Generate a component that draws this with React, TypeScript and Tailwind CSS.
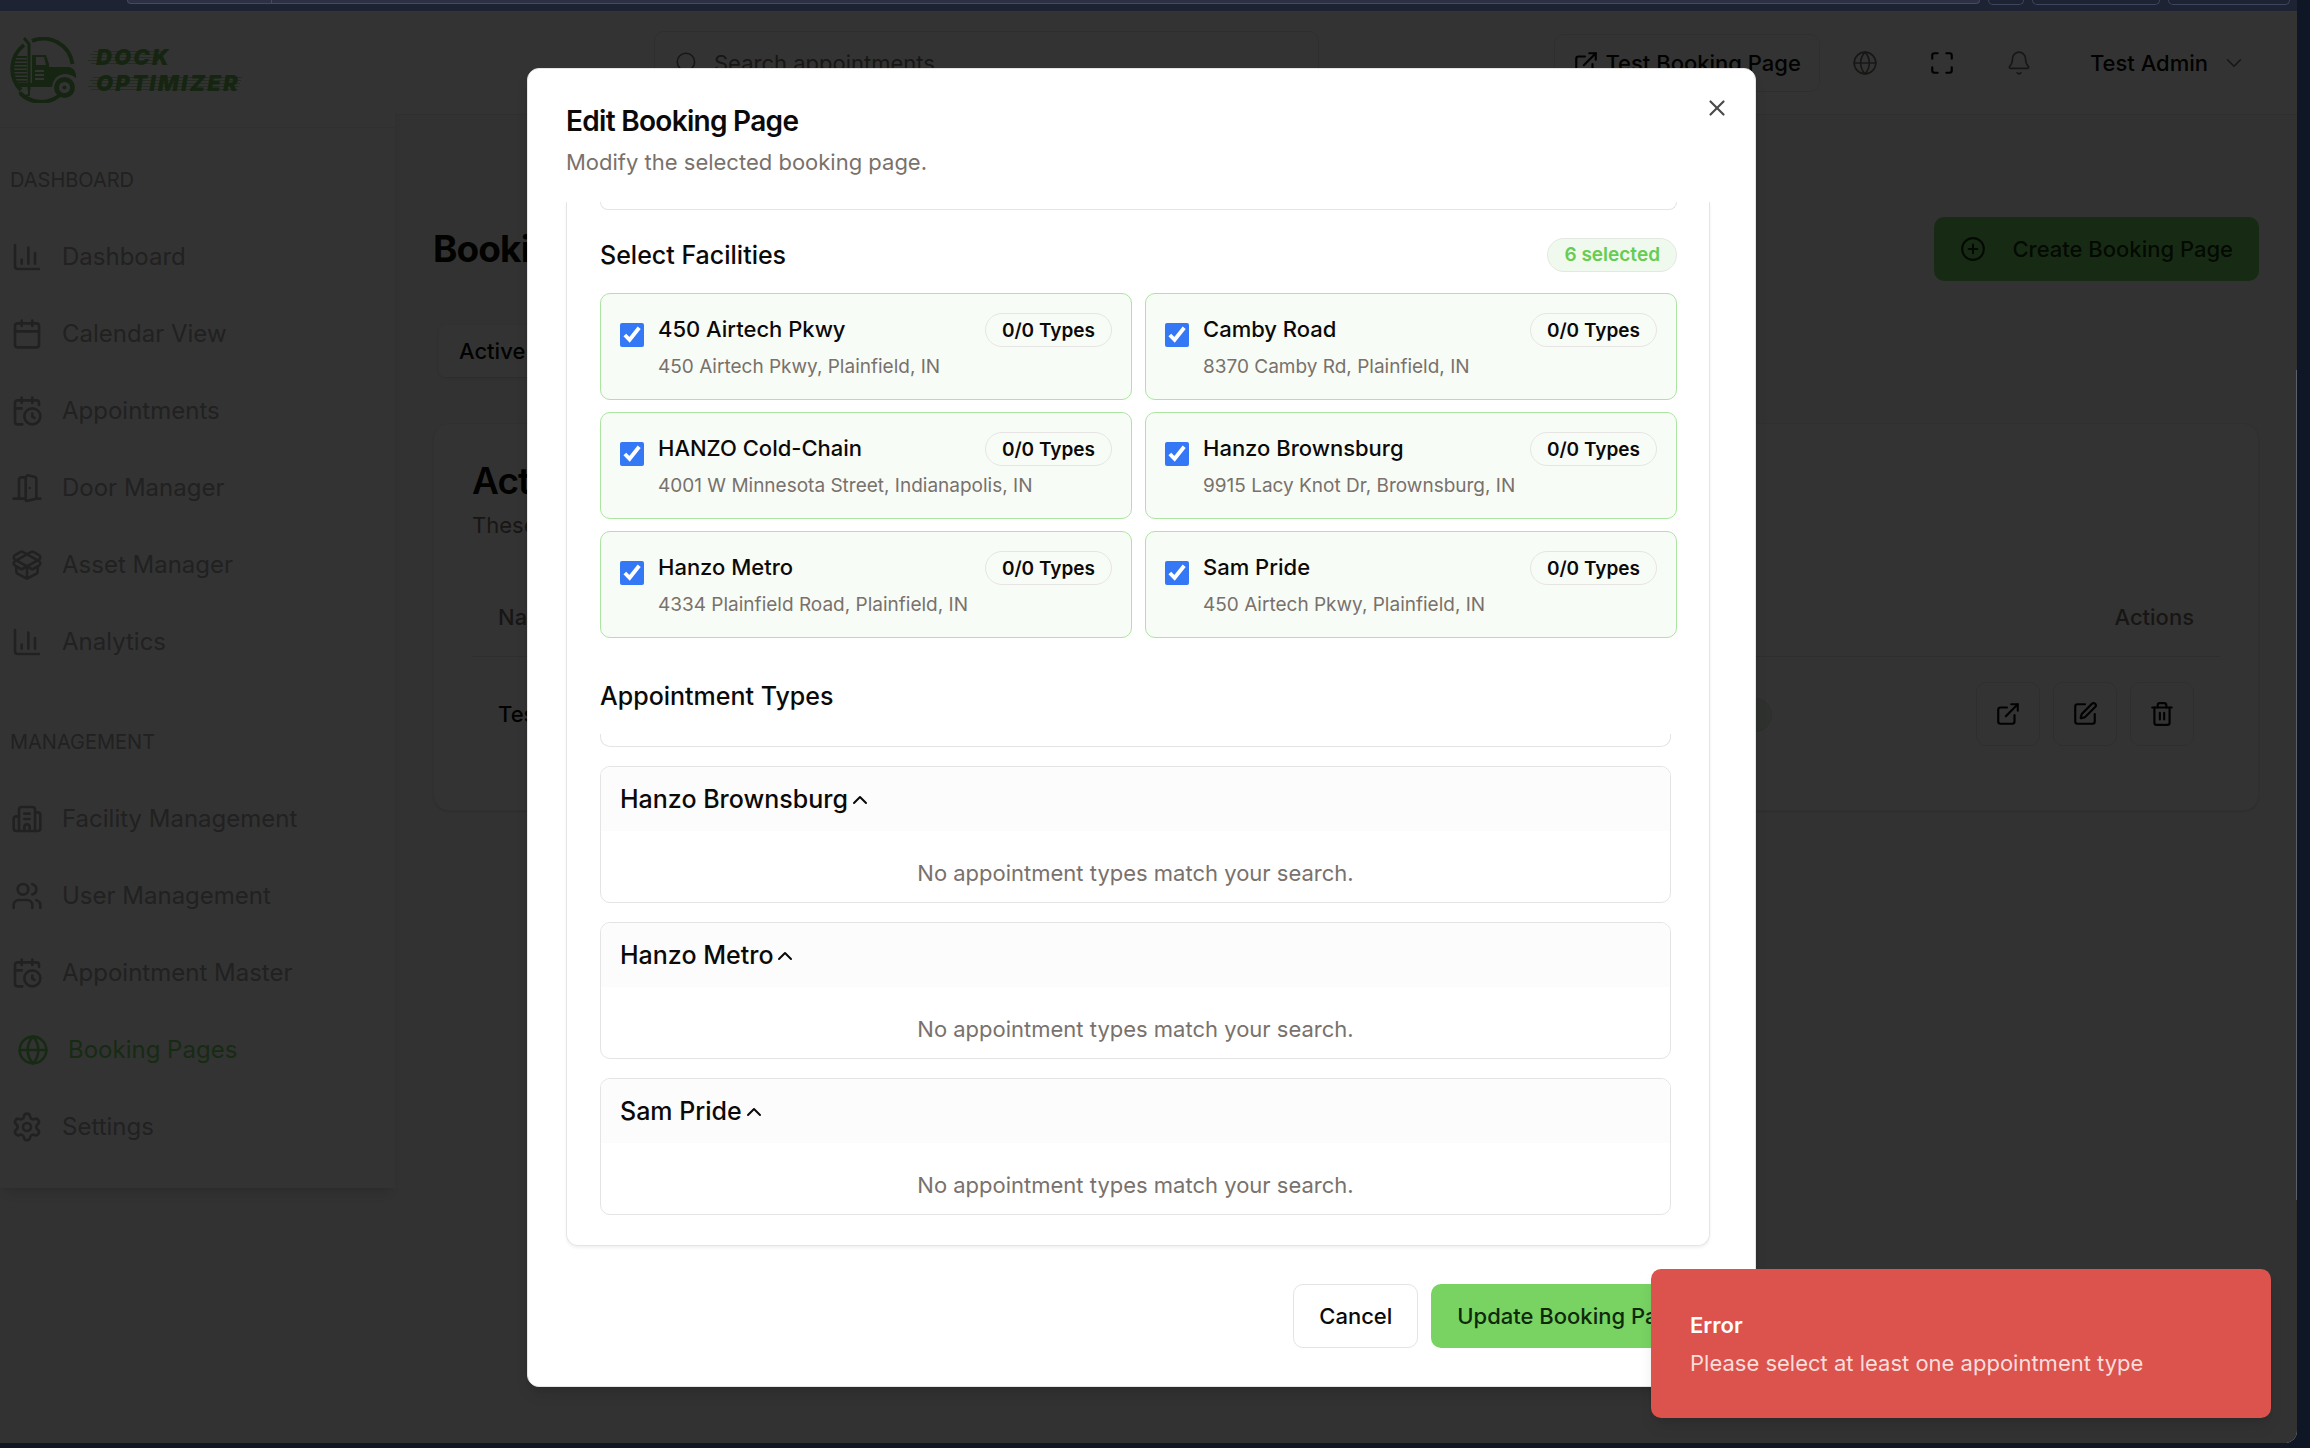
import {
  Bell,
  Building2,
  Calendar,
  CalendarClock,
  ChartColumn,
  ChevronDown,
  ChevronUp,
  CirclePlus,
  DoorOpen,
  ExternalLink,
  Globe,
  Maximize,
  PackageOpen,
  Search,
  Settings,
  SquarePen,
  Trash2,
  Users,
  X,
  type LucideIcon,
} from "lucide-react";

type NavEntry = { label: string; icon: LucideIcon; active?: boolean };

const dashboardNav: NavEntry[] = [
  { label: "Dashboard", icon: ChartColumn },
  { label: "Calendar View", icon: Calendar },
  { label: "Appointments", icon: CalendarClock },
  { label: "Door Manager", icon: DoorOpen },
  { label: "Asset Manager", icon: PackageOpen },
  { label: "Analytics", icon: ChartColumn },
];

const managementNav: NavEntry[] = [
  { label: "Facility Management", icon: Building2 },
  { label: "User Management", icon: Users },
  { label: "Appointment Master", icon: CalendarClock },
  { label: "Booking Pages", icon: Globe, active: true },
  { label: "Settings", icon: Settings },
];

const facilities = [
  { name: "450 Airtech Pkwy", address: "450 Airtech Pkwy, Plainfield, IN" },
  { name: "Camby Road", address: "8370 Camby Rd, Plainfield, IN" },
  { name: "HANZO Cold-Chain", address: "4001 W Minnesota Street, Indianapolis, IN" },
  { name: "Hanzo Brownsburg", address: "9915 Lacy Knot Dr, Brownsburg, IN" },
  { name: "Hanzo Metro", address: "4334 Plainfield Road, Plainfield, IN" },
  { name: "Sam Pride", address: "450 Airtech Pkwy, Plainfield, IN" },
];

const typeGroups = ["Hanzo Brownsburg", "Hanzo Metro", "Sam Pride"];

function BrowserChrome() {
  return (
    <div className="flex h-3 shrink-0 items-start gap-2 border-b border-[#2a3358] bg-[#1d2333] pr-[7px] pl-[127px]">
      <div className="flex h-1 flex-1 rounded-b-md border-x border-b border-[#454a60] bg-[#2d3145]">
        <div className="w-36 border-r border-[#454a60]" />
      </div>
      <div className="h-[5px] w-9 rounded-b-md border border-t-0 border-[#3d4560]" />
      <div className="h-[5px] w-32 rounded-b-md border border-t-0 border-[#3d4560]" />
      <div className="h-[5px] w-[122px] rounded-b-md border border-t-0 border-[#3d4560]" />
    </div>
  );
}

function SpeedLines({ width }: { width: number }) {
  return (
    <svg
      aria-hidden="true"
      className="absolute top-[3px] left-0 opacity-50"
      width={width}
      height="15"
      stroke="currentColor"
      strokeWidth="1"
    >
      <path d={`M5 1.5H${width - 4}M2 4.5H${width - 5}M4 7.5H${width - 6}M0 10.5H${width - 7}M3 13.5H${width - 8}`} />
    </svg>
  );
}

function Logo() {
  return (
    <div className="flex items-center gap-2.5 text-[#6fb854]">
      <svg width="68" height="66" viewBox="0 0 68 66" fill="none" aria-hidden="true">
        <path d="M22 4A29.500 29.500 0 0 1 62.500 27" stroke="currentColor" strokeWidth="4" />
        <path d="M14 8A30 30 0 0 0 11 53" stroke="currentColor" strokeWidth="4" />
        <path d="M10 56A29.500 29.500 0 0 0 50 58" stroke="currentColor" strokeWidth="4" />
        <path d="M14 1l5 6v46" stroke="currentColor" strokeWidth="3" />
        <path
          d="M5 20h12M4 23.500h13M3 27h14M3 30.500h14M3 34h14M3 37.500h14M4 41h13M5 44.500h12"
          stroke="currentColor"
          strokeWidth="2"
        />
        <path
          fillRule="evenodd"
          d="M22 18h14l3 9v3h20q6 1 7 8v3q-5-4-12-4-10 1-12 13H7l-2-4h17zM34 20h-8v8h10zM25 33v2h9v-2zM25 37v2h9v-2zM25 41v2h9v-2z"
          fill="currentColor"
        />
        <path d="M19 50v8l-4 1-6-4" stroke="currentColor" strokeWidth="2" />
        <circle cx="54.500" cy="50.500" r="8" stroke="currentColor" strokeWidth="5" />
        <circle cx="54.500" cy="50.500" r="2" fill="currentColor" />
      </svg>
      <div className="flex flex-col gap-1.5 text-[22px] leading-5 font-black tracking-widest italic">
        <span className="relative pl-2">
          <SpeedLines width={78} />
          DOCK
        </span>
        <span className="relative pl-2">
          <SpeedLines width={158} />
          OPTIMIZER
        </span>
      </div>
    </div>
  );
}

function NavSection({ title, items }: { title: string; items: NavEntry[] }) {
  return (
    <section>
      <h2 className="mb-[25px] px-2.5 text-xl leading-[26px] text-[#a3a3a3]">{title}</h2>
      {items.map(({ label, icon: Icon, active }) => (
        <a
          key={label}
          href="#"
          className={
            active
              ? "flex h-[77px] items-center gap-[19px] pl-[17px] text-2xl text-[#75d563]"
              : "flex h-[77px] items-center gap-[19px] pl-[11px] text-2xl text-[#a3a3a3]"
          }
        >
          <Icon className="size-8" />
          {label}
        </a>
      ))}
    </section>
  );
}

function Sidebar() {
  return (
    <aside className="flex w-[395px] shrink-0 flex-col self-start bg-white shadow-lg">
      <div className="flex h-[116px] items-center border-b border-[#efefef] px-[10px]">
        <Logo />
      </div>
      <nav className="flex flex-col gap-[49px] pt-[39px] pb-[23px]">
        <NavSection title="DASHBOARD" items={dashboardNav} />
        <NavSection title="MANAGEMENT" items={managementNav} />
      </nav>
    </aside>
  );
}

function TopHeader() {
  return (
    <header className="flex h-[103px] items-center justify-between border-b border-[#ececec] bg-white pr-6 pl-[259px]">
      <label className="flex h-16 w-[665px] items-center gap-3.5 rounded-[10px] border border-[#e7e5e4] px-[19px] text-stone-500">
        <Search className="size-[26px]" strokeWidth={1.5} />
        <input
          type="text"
          aria-label="Search appointments"
          placeholder="Search appointments"
          className="min-w-0 flex-1 bg-transparent text-[22px] outline-none placeholder:text-stone-500"
        />
      </label>
      <div className="flex items-center gap-[13px]">
        <button className="flex h-[58px] items-center gap-1.5 rounded-[10px] border border-[#e7e5e4] px-[18px] text-[22px] font-medium text-stone-950">
          <ExternalLink className="size-[26px]" />
          Test Booking Page
        </button>
        <button aria-label="Language" className="grid size-16 place-items-center text-stone-500">
          <Globe className="size-[26px]" strokeWidth={1.5} />
        </button>
        <button aria-label="Full screen" className="grid size-16 place-items-center text-stone-950">
          <Maximize className="size-[26px]" />
        </button>
        <button aria-label="Notifications" className="grid size-16 place-items-center text-stone-500">
          <Bell className="size-[26px]" strokeWidth={1.5} />
        </button>
        <button className="flex h-16 items-center gap-[13px] px-[26px] text-[22px] font-medium text-stone-950">
          Test Admin
          <ChevronDown className="size-[26px] text-stone-500" strokeWidth={1.5} />
        </button>
      </div>
    </header>
  );
}

const rowActions = [
  { label: "Open", icon: ExternalLink },
  { label: "Edit", icon: SquarePen },
  { label: "Delete", icon: Trash2 },
];

function BookingPages() {
  return (
    <main className="px-[38px] pt-[102px]">
      <div className="flex items-center justify-between">
        <h1 className="text-[37px] leading-[48px] font-bold tracking-tight text-stone-950">Booking Pages</h1>
        <button className="flex h-16 items-center gap-[26px] rounded-[10px] bg-[#75d563] px-[26px] text-[22px] font-medium text-[#14350f]">
          <CirclePlus className="size-[26px]" />
          Create Booking Page
        </button>
      </div>
      <div role="tablist" className="mt-[38px] flex h-16 w-72 rounded-[10px] bg-[#f7f7f7] p-1.5">
        <button
          role="tab"
          aria-selected="true"
          className="rounded-md bg-white px-5 text-[22px] font-medium text-stone-950 shadow-sm"
        >
          Active
        </button>
      </div>
      <section className="mt-10 rounded-2xl border border-[#f0f0f0] bg-white p-[38px] shadow-sm">
        <h2 className="text-[37px] leading-[38px] font-semibold tracking-tight text-stone-950">Active Booking Pages</h2>
        <p className="mt-[9px] text-[22px] leading-8 text-stone-500">These booking pages are live.</p>
        <table className="mt-[38px] w-full table-fixed border-collapse text-[22px]">
          <thead>
            <tr className="h-[77px] border-b border-[#e4e4e4] text-stone-500">
              <th className="px-[26px] text-left font-medium">Name</th>
              <th className="w-[148px] px-[26px] text-left font-medium">Status</th>
              <th className="w-[422px] px-[26px] text-right font-medium">Actions</th>
            </tr>
          </thead>
          <tbody>
            <tr className="h-[116px]">
              <td className="px-[26px] font-medium text-stone-950">Test</td>
              <td className="px-[26px] text-right">
                <span className="inline-block rounded-full border border-[#cfe8d6] bg-[#e8f5ec] px-4 text-[19px] leading-8 font-semibold text-[#3b8f4f]">
                  Active
                </span>
              </td>
              <td className="px-[26px]">
                <div className="flex justify-end gap-[13px] text-stone-950">
                  {rowActions.map(({ label, icon: Icon }) => (
                    <button
                      key={label}
                      aria-label={label}
                      className="grid size-16 place-items-center rounded-[10px] border border-[#e7e5e4]"
                    >
                      <Icon className="size-[26px]" />
                    </button>
                  ))}
                </div>
              </td>
            </tr>
          </tbody>
        </table>
      </section>
    </main>
  );
}

function FacilityCard({ name, address, id }: { name: string; address: string; id: string }) {
  return (
    <div className="flex gap-3.5 rounded-[10px] border border-[#ace4a1] bg-[#f8fcf7] p-[19px]">
      <input id={id} type="checkbox" defaultChecked className="mt-2.5 size-6 shrink-0 accent-[#3478f6]" />
      <div className="min-w-0 flex-1">
        <div className="flex h-[34px] items-center justify-between">
          <label htmlFor={id} className="text-[22px] font-medium text-stone-950">
            {name}
          </label>
          <span className="rounded-full border border-[#e7e5e4] px-4 pt-0.5 text-[19px] leading-[30px] font-semibold text-stone-950">
            0/0 Types
          </span>
        </div>
        <p className="mt-[7px] text-[19px] leading-[26px] text-stone-500">{address}</p>
      </div>
    </div>
  );
}

function EditDialog() {
  return (
    <div
      role="dialog"
      aria-label="Edit Booking Page"
      className="relative flex h-[92.2%] w-[1229px] max-w-full flex-col rounded-xl border border-[#e7e5e4] bg-white p-[38px] shadow-lg"
    >
      <button aria-label="Close" className="absolute top-[26px] right-[25px] text-[#4a4a4a]">
        <X className="size-[26px]" />
      </button>
      <h2 className="text-[28px] leading-[29px] font-semibold tracking-tight text-stone-950">Edit Booking Page</h2>
      <p className="mt-2.5 text-[22px] leading-8 text-stone-500">Modify the selected booking page.</p>

      <div className="mt-6 mr-[7px] flex min-h-0 flex-1 flex-col rounded-b-xl border-x border-b border-[#e7e5e4] pr-8 pb-8 pl-[33px] shadow-[0_2px_3px_rgba(0,0,0,0.06)]">
        <div className="h-2 shrink-0 rounded-b-[10px] border-x border-b border-[#e4e4e4]" />

        <div className="mt-7 flex h-[34px] shrink-0 items-center justify-between">
          <h3 className="pt-0.5 text-[25px] font-medium text-stone-950">Select Facilities</h3>
          <span className="rounded-full border border-[#e3e8e0] bg-[#f0f9ee] px-4 text-[19px] leading-8 font-semibold text-[#66cc52]">
            6 selected
          </span>
        </div>
        <div className="mt-[21px] grid grid-cols-2 gap-x-[13px] gap-y-3">
          {facilities.map((facility, index) => (
            <FacilityCard key={facility.name} id={`facility-${index}`} {...facility} />
          ))}
        </div>

        <h3 className="mt-10 text-[25px] leading-9 font-medium text-stone-950">Appointment Types</h3>
        <div className="mt-5 flex flex-col gap-[19px] pr-1.5">
          <div className="h-[13px] rounded-b-[10px] border-x border-b border-[#e4e4e4]" />
          {typeGroups.map((group) => (
            <section key={group} className="overflow-hidden rounded-[10px] border border-[#e4e4e4]">
              <button
                aria-expanded="true"
                className="flex h-16 w-full items-center bg-[#fcfcfc] px-[19px] pt-0.5 text-[25px] font-medium text-stone-950"
              >
                {group}
                <ChevronUp className="size-6" />
              </button>
              <p className="pt-[26px] pb-[13px] text-center text-[22px] leading-8 text-stone-500">
                No appointment types match your search.
              </p>
            </section>
          ))}
        </div>
      </div>

      <div className="mt-[38px] mr-[7px] flex shrink-0 justify-end gap-[13px] text-[22px] font-medium">
        <button className="h-16 rounded-[10px] border border-[#e4e4e4] px-[25px] text-stone-950">Cancel</button>
        <button className="h-16 rounded-[10px] bg-[#78d363] px-[26px] text-[#0f2a0b]">Update Booking Page</button>
      </div>
    </div>
  );
}

function ErrorToast() {
  return (
    <div
      role="alert"
      className="absolute right-[26px] bottom-[25px] w-[620px] rounded-[10px] bg-[#dc524c] px-[39px] pt-10 pb-[39px] text-[22px] text-white shadow-lg"
    >
      <p className="leading-8 font-semibold">Error</p>
      <p className="mt-1.5 leading-8 text-[#f9dddb]">Please select at least one appointment type</p>
    </div>
  );
}

export default function App() {
  return (
    <div className="flex h-screen flex-col bg-[#0f1626] pr-[13px] pb-[5px] font-['Inter',sans-serif]">
      <BrowserChrome />
      <div className="relative min-h-0 flex-1 overflow-hidden rounded-br-xl bg-[#fafafa]">
        <div className="flex">
          <Sidebar />
          <div className="min-w-0 flex-1">
            <TopHeader />
            <BookingPages />
          </div>
        </div>
        <div className="absolute inset-0 flex items-center justify-center bg-black/80 pr-[14px]">
          <EditDialog />
        </div>
        <ErrorToast />
        <div className="absolute top-[25%] right-0 h-[58%] w-px bg-[#5b5f6b]" />
      </div>
    </div>
  );
}
